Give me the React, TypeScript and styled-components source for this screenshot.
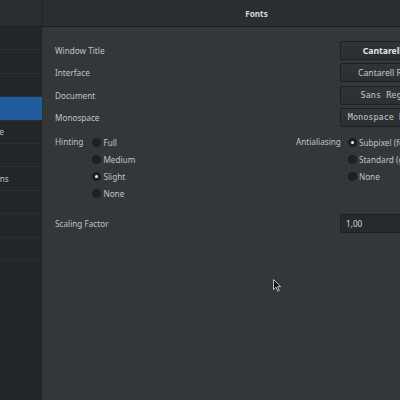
import styled, { createGlobalStyle } from 'styled-components'

const GlobalStyle = createGlobalStyle`
  html, body {
    margin: 0;
    padding: 0;
    overflow: hidden;
    background: #33373a;
  }
  body {
    font-family: "Noto Sans", "DejaVu Sans", sans-serif;
    font-size: 8.2px;
    -webkit-font-smoothing: antialiased;
  }
`

// the window is wider than the view, its sidebar runs off the left edge
const Window = styled.div`
  position: relative;
  display: grid;
  grid-template-columns: 170px 427px;
  grid-template-rows: 27px 373px;
  margin-left: -127px;
  width: 597px;
  height: 400px;
`

const SideHeader = styled.div`
  background: #2b2e31;
  border-bottom: 1px solid #1b1e20;
  border-right: 1px solid #222527;
`

const HeaderBar = styled.div`
  background: #2b2e31;
  border-bottom: 1px solid #1b1e20;
  display: flex;
  align-items: center;
  justify-content: center;
  color: #d5d8db;
  font-weight: bold;
  font-size: 8.2px;
`

const Sidebar = styled.div`
  background: #232629;
  border-right: 1px solid #2f3336;
`

const SideItem = styled.div<{ $active?: boolean }>`
  height: 22.4px;
  display: flex;
  align-items: center;
  padding-left: 58px;
  border-bottom: 1px solid #2b2f32;
  background: ${p => (p.$active ? '#215d9c' : 'transparent')};
  color: ${p => (p.$active ? '#ffffff' : '#bcc2c8')};
  white-space: nowrap;
`

const Content = styled.div`
  padding: 14px 12px 0 12px;
  color: #bec4ca;
`

const FontRow = styled.div`
  display: flex;
  align-items: center;
  justify-content: space-between;
  height: 19px;
  margin-bottom: 3.3px;
`

const FontButton = styled.div<{ $bold?: boolean; $mono?: boolean }>`
  width: 118px;
  height: 19px;
  box-sizing: border-box;
  display: flex;
  align-items: center;
  justify-content: center;
  background: linear-gradient(#303437, #2b2f32);
  border: 1px solid #1c1f21;
  border-radius: 2px;
  color: ${p => (p.$bold ? '#e2e5e8' : '#c4cace')};
  font-weight: ${p => (p.$bold ? 'bold' : 'normal')};
  font-family: ${p => (p.$mono ? '"DejaVu Sans Mono", monospace' : 'inherit')};
  font-size: ${p => (p.$mono ? '8.5px' : '8.6px')};
  white-space: nowrap;
`

const Options = styled.div`
  display: grid;
  grid-template-columns: 241px 1fr;
  margin-top: 7px;
`

const OptionGroup = styled.div<{ $gap: number }>`
  display: flex;
  gap: ${p => p.$gap}px;
`

const GroupLabel = styled.div`
  height: 17px;
  line-height: 15px;
`

const RadioList = styled.div`
  display: flex;
  flex-direction: column;
`

const RadioItem = styled.div`
  height: 17px;
  display: flex;
  align-items: center;
  gap: 2px;
  white-space: nowrap;
`

const Radio = styled.span<{ $on?: boolean }>`
  width: 9px;
  height: 9px;
  box-sizing: border-box;
  border-radius: 50%;
  background: #1f2224;
  border: 1px solid #17191b;
  display: flex;
  align-items: center;
  justify-content: center;
  &::after {
    content: '';
    display: ${p => (p.$on ? 'block' : 'none')};
    width: 3px;
    height: 3px;
    border-radius: 50%;
    background: #f2f2f2;
  }
`

const ScaleRow = styled.div`
  display: flex;
  align-items: center;
  justify-content: space-between;
  margin-top: 12px;
  height: 19px;
`

const SpinEntry = styled.div`
  width: 118px;
  height: 19px;
  box-sizing: border-box;
  display: flex;
  align-items: center;
  padding-left: 5px;
  background: #272a2d;
  border: 1px solid #1d2022;
  border-radius: 2px;
  color: #d3d7db;
`

const Pointer = styled.svg`
  position: absolute;
  left: 400px;
  top: 279px;
`

const pages = [
  'Appearance',
  'Desktop',
  'Extensions',
  'Fonts',
  'Keyboard & Mouse',
  'Power',
  'Startup Applications',
  'Top Bar',
  'Windows',
  'Workspaces',
]

const fonts = [
  { label: 'Window Title', value: 'Cantarell Bold 11', bold: true },
  { label: 'Interface', value: 'Cantarell Regular 11' },
  { label: 'Document', value: 'Sans Regular 11', mono: true },
  { label: 'Monospace', value: 'Monospace Regular 11', mono: true },
]

function RadioGroup({ items, selected }: { items: string[]; selected: string }) {
  return (
    <RadioList>
      {items.map(item => (
        <RadioItem key={item}>
          <Radio $on={item === selected} />
          {item}
        </RadioItem>
      ))}
    </RadioList>
  )
}

export default function App() {
  return (
    <>
      <GlobalStyle />
      <Window>
        <SideHeader />
        <HeaderBar>Fonts</HeaderBar>
        <Sidebar>
          {pages.map(p => (
            <SideItem key={p} $active={p === 'Fonts'}>
              {p}
            </SideItem>
          ))}
        </Sidebar>
        <Content>
          {fonts.map(f => (
            <FontRow key={f.label}>
              {f.label}
              <FontButton $bold={f.bold} $mono={f.mono}>
                {f.value}
              </FontButton>
            </FontRow>
          ))}
          <Options>
            <OptionGroup $gap={9}>
              <GroupLabel>Hinting</GroupLabel>
              <RadioGroup items={['Full', 'Medium', 'Slight', 'None']} selected="Slight" />
            </OptionGroup>
            <OptionGroup $gap={7}>
              <GroupLabel>Antialiasing</GroupLabel>
              <RadioGroup
                items={['Subpixel (for LCD screens)', 'Standard (grayscale)', 'None']}
                selected="Subpixel (for LCD screens)"
              />
            </OptionGroup>
          </Options>
          <ScaleRow>
            Scaling Factor
            <SpinEntry>1,00</SpinEntry>
          </ScaleRow>
        </Content>
        <Pointer width="9" height="13" viewBox="0 0 9 13">
          <path
            d="M0.5 0.5 L0.5 10.5 L3 8.2 L4.8 12.2 L6.3 11.5 L4.6 7.6 L7.8 7.6 Z"
            fill="#111"
            stroke="#bbb"
            strokeWidth="1"
          />
        </Pointer>
      </Window>
    </>
  )
}
